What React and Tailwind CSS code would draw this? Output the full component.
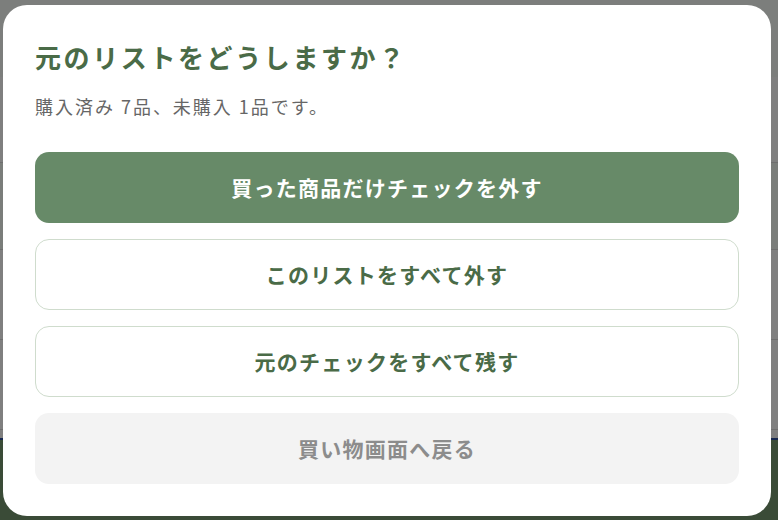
const ChoiceButton = ({ label, variant }) => {
  const styles = {
    primary: "bg-[#678a68] text-white",
    outline: "bg-white border border-[#cfdccd] text-[#4a6b47]",
    muted: "bg-[#f3f3f3] text-[#8c8c8c]",
  };
  return (
    <button
      className={`h-[71px] w-full rounded-[14px] text-[21px] font-bold tracking-[0.06em] ${styles[variant]}`}
    >
      {label}
    </button>
  );
};

export default function App() {
  return (
    <div
      className="relative h-[520px] w-[778px] overflow-hidden bg-white"
      style={{ fontFamily: '"Noto Sans CJK JP", "Noto Sans", sans-serif' }}
    >
      {/* page behind the dialog */}
      <div className="flex h-full flex-col">
        <div className="h-[77px] bg-[#f8fcf8] px-1 pt-10">
          <div className="h-[8px] w-[6px] bg-[#3c5a3a]" />
        </div>
        <div className="h-[86px] border-b border-[#dcdcdc] bg-white" />
        <div className="h-[87px] border-b border-[#dcdcdc] bg-[#f5faf5]" />
        <div className="h-[90px] border-b border-[#dcdcdc] bg-white" />
        <div className="h-[90px] border-b border-[#dcdcdc] bg-white" />
        <div className="h-[8px] bg-white" />
        <div className="h-[2px] bg-[#2d4fa0]" />
        <div className="flex-1 bg-[#74966f]" />
      </div>

      {/* overlay */}
      <div className="absolute inset-0 flex items-start bg-black/50 pl-[3px] pt-[5px]">
        <div className="flex h-[511px] w-[768px] flex-col rounded-[24px] bg-white px-[32px] pt-[34px]">
          <h2 className="text-[26px] font-bold leading-[36px] tracking-[0.1em] text-[#4a6b47]">
            元のリストをどうしますか？
          </h2>
          <p className="mt-[18px] text-[18px] leading-[26px] tracking-[0.11em] text-[#666666]">
            購入済み 7品、未購入 1品です。
          </p>
          <div className="mt-[33px] flex flex-col gap-[16px]">
            <ChoiceButton label="買った商品だけチェックを外す" variant="primary" />
            <ChoiceButton label="このリストをすべて外す" variant="outline" />
            <ChoiceButton label="元のチェックをすべて残す" variant="outline" />
            <ChoiceButton label="買い物画面へ戻る" variant="muted" />
          </div>
        </div>
      </div>
    </div>
  );
}
